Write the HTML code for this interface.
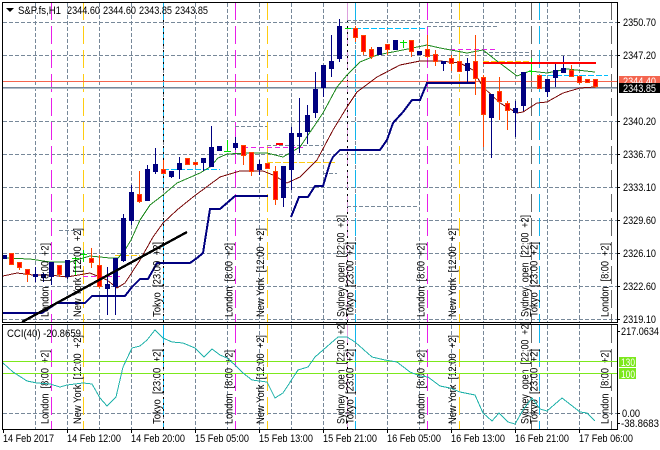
<!DOCTYPE html>
<html><head><meta charset="utf-8"><style>
html,body{margin:0;padding:0;background:#fff;width:660px;height:450px;overflow:hidden}
svg{display:block}
text{font-family:"Liberation Sans",sans-serif;font-size:11px;fill:#000;white-space:pre}
.c{shape-rendering:crispEdges}
</style></head><body>
<svg width="660" height="450" viewBox="0 0 660 450" xmlns="http://www.w3.org/2000/svg">
<rect width="660" height="450" fill="#fff"/>
<g class="c" fill="none">
<!-- grid -->
<path stroke="#778899" stroke-dasharray="4 2" d="M35.5 3V322M67.5 3V322M99.5 3V322M131.5 3V322M163.5 3V322M195.5 3V322M227.5 3V322M259.5 3V322M291.5 3V322M323.5 3V322M355.5 3V322M387.5 3V322M419.5 3V322M451.5 3V322M483.5 3V322M515.5 3V322M547.5 3V322M579.5 3V322M35.5 325V429M67.5 325V429M99.5 325V429M131.5 325V429M163.5 325V429M195.5 325V429M227.5 325V429M259.5 325V429M291.5 325V429M323.5 325V429M355.5 325V429M387.5 325V429M419.5 325V429M451.5 325V429M483.5 325V429M515.5 325V429M547.5 325V429M579.5 325V429"/>
<path stroke="#778899" stroke-dasharray="4 2" d="M3 22.5H617M3 55.5H617M3 121.5H617M3 154.5H617M3 187.5H617M3 220.5H617M3 253.5H617M3 286.5H617M3 319.5H617M3 413.5H617"/>
<!-- session lines -->
<g stroke-dasharray="18 6">
<path stroke="#e81fe8" d="M51.5 2V322M235.5 2V322M427.5 2V322M51.5 325V429M235.5 325V429M427.5 325V429"/>
<path stroke="#ffcc11" d="M83.5 2V322M267.5 2V322M459.5 2V322M83.5 325V429M267.5 325V429M459.5 325V429"/>
<path stroke="#10b4ec" d="M163.5 2V322M355.5 2V322M539.5 2V322M163.5 325V429M355.5 325V429M539.5 325V429"/>
<path stroke="#dda0dd" d="M347.5 2V322M347.5 325V429"/>
<path stroke="#666" d="M531.5 2V322M531.5 325V429M611.5 2V322M611.5 325V429"/>
</g>
<path stroke="#000" stroke-dasharray="2 4" d="M163.5 20V322M347.5 20V322M163.5 343V429M347.5 343V429"/>
<!-- objects -->
<path stroke="#778899" stroke-dasharray="4 2" d="M347 20.5H417M427 26.5H497M483 52.5H531M235 126.5H267M267 145.5H323M323 173.5H337M347 206.5H417M59 230.5H83"/>
<path stroke="#00bfff" stroke-dasharray="6 2" d="M347 28.5H425M540 75.5H608M163 169.5H220"/>
<path stroke="#e81fe8" stroke-dasharray="5 3" d="M450 49.5H496M243 147.5H303M83 276.5H120"/>
<path stroke="#ffcc11" stroke-dasharray="6 2" d="M483 61.5H530M267 162.5H335M115 255.5H140"/>
<path stroke="#f4654f" d="M3 81.5H617"/>
<path stroke="#778899" d="M3 87.5H617"/>
<path stroke="#b0bcc8" d="M3 88.5H617"/>
</g>
<!-- lines under candles -->
<path class="c" fill="none" stroke="#1f8a1f" d="M3 258L30 259L50 262L70 262L90 256L110 258L118 258L125 250L131 240L140 220L150 205L163 195L177 183L200 173L210 167L218 158L227 154L250 153L267 153L283 157L300 147L323 113L337 87L347 75L360 62L377 55L403 50L427 45L440 48L467 53L483 50L497 61L517 76L530 71L547 73L567 69L595 72"/>
<path class="c" fill="none" stroke="#7a0a0a" d="M3 276L17 273L33 275L50 275L67 277L90 273L107 280L117 288L125 283L140 260L153 237L163 223L177 210L193 197L220 177L240 171L263 171L273 175L287 183L300 177L317 160L333 130L347 107L357 92L377 77L400 65L420 61L440 61L460 63L473 70L483 87L500 103L517 113L523 112L537 103L547 102L563 93L580 88L595 87"/>
<path class="c" fill="none" stroke="#000080" stroke-width="2" d="M3 313H42L57 303H85L92 296H125L132 287L140 279H148L157 263H190L197 258L203 253L210 209H220L235 196H268M291 217L299 197H308L315 186H323L330 163L333 157L340 150H380L387 140L393 123L403 112L412 100H420L427 83H475"/>
<!-- wicks -->
<g class="c" fill="none">
<path stroke="#000080" d="M35.5 267V282M43.5 273V282M51.5 262V285M67.5 260V279M107.5 267V315M115.5 258V315M123.5 214V262M131.5 185V225M147.5 165V201M155.5 148V174M171.5 171V178M179.5 157V179M203.5 158V171M211.5 126V167M235.5 137V150M259.5 160V175M283.5 166V207M291.5 127V190M299.5 98V153M307.5 105V144M315.5 72V118M323.5 65V97M331.5 35V77M339.5 19V62M443.5 61V71M467.5 58V83M491.5 94V158M515.5 101V137M523.5 72V111M547.5 79V97M555.5 63V87M563.5 56V73"/>
<path stroke="#ff4500" d="M19.5 262V270M27.5 269V282M59.5 265V277M91.5 248V268M99.5 255V288M139.5 171V203M163.5 160V174M195.5 162V166M243.5 145V165M251.5 152V176M275.5 166V205M355.5 26V42M363.5 35V55M371.5 47V59M387.5 44V55M411.5 40V57M427.5 35V58M435.5 50V66M451.5 55V71M475.5 35V95M483.5 75V147M499.5 77V120M507.5 101V130M571.5 65V77M579.5 76V84M595.5 79V88"/>
<path stroke="#00e000" d="M75.5 257V275M72 258.5H79M83.5 250V262M80 254.5H87M227.5 140V151M224 151.5H231M345 28.5H351M403.5 40V48M400 42.5H407M531.5 58V75M528 71.5H535"/>
<!-- bodies -->
<path fill="#000080" d="M3 255h4v4h-4zM33 274h5v3h-5zM41 274h5v4h-5zM49 262h5v15h-5zM65 260h5v17h-5zM105 284h5v5h-5zM113 258h5v29h-5zM121 218h5v43h-5zM129 192h5v29h-5zM145 169h5v32h-5zM153 164h5v8h-5zM169 171h5v6h-5zM177 163h5v7h-5zM201 158h5v5h-5zM209 147h5v20h-5zM217 146h5v5h-5zM233 143h5v5h-5zM257 164h5v6h-5zM281 166h5v32h-5zM289 133h5v37h-5zM297 133h5v4h-5zM305 115h5v17h-5zM313 89h5v24h-5zM321 65h5v23h-5zM329 61h5v8h-5zM337 26h5v33h-5zM377 47h5v8h-5zM393 40h5v10h-5zM417 51h5v4h-5zM441 61h5v3h-5zM465 63h5v8h-5zM489 94h5v24h-5zM513 108h5v5h-5zM521 72h5v34h-5zM545 79h5v13h-5zM553 70h5v8h-5zM561 68h5v5h-5z"/>
<path fill="#ff0000" stroke="#ff4500" d="M9.5 253.5h4v11h-4zM17.5 262.5h4v5h-4zM25.5 269.5h4v5h-4zM57.5 265.5h4v9h-4zM89.5 258.5h4v4h-4zM97.5 265.5h4v21h-4zM137.5 194.5h4v7h-4zM161.5 169.5h4v4h-4zM185.5 158.5h4v6h-4zM193.5 162.5h4v2h-4zM241.5 145.5h4v10h-4zM249.5 152.5h4v19h-4zM265.5 163.5h4v5h-4zM273.5 171.5h4v28h-4zM353.5 28.5h4v9h-4zM361.5 35.5h4v16h-4zM369.5 49.5h4v7h-4zM385.5 44.5h4v5h-4zM409.5 40.5h4v11h-4zM425.5 49.5h4v7h-4zM433.5 54.5h4v7h-4zM449.5 58.5h4v5h-4zM457.5 61.5h4v10h-4zM473.5 61.5h4v17h-4zM481.5 77.5h4v37h-4zM497.5 91.5h4v10h-4zM505.5 103.5h4v7h-4zM537.5 75.5h4v13h-4zM569.5 70.5h4v6h-4zM577.5 76.5h4v6h-4zM585.5 79.5h4v3h-4zM593.5 79.5h4v7h-4z"/>
<path stroke="#ff0000" stroke-width="2" d="M483 63H596M276 144H283"/>
</g>
<path class="c" stroke="#000" stroke-width="2.4" d="M22 322L187 232"/>
<!-- session labels -->
<g style="font-size:11px">
<text transform="translate(48.5,317) rotate(-90)" textLength="74" lengthAdjust="spacingAndGlyphs">London  [8:00  +2]</text>
<text transform="translate(81,317) rotate(-90)" textLength="89" lengthAdjust="spacingAndGlyphs">New York  [12:00  +2]</text>
<text transform="translate(160.5,317) rotate(-90)" textLength="75" lengthAdjust="spacingAndGlyphs">Tokyo  [23:00  +2]</text>
<text transform="translate(232.5,317) rotate(-90)" textLength="74" lengthAdjust="spacingAndGlyphs">London  [8:00  +2]</text>
<text transform="translate(264,317) rotate(-90)" textLength="89" lengthAdjust="spacingAndGlyphs">New York  [12:00  +2]</text>
<text transform="translate(344.5,317) rotate(-90)" textLength="102" lengthAdjust="spacingAndGlyphs">Sydney  open  [22:00  +2]</text>
<text transform="translate(353.5,317) rotate(-90)" textLength="75" lengthAdjust="spacingAndGlyphs">Tokyo  [23:00  +2]</text>
<text transform="translate(424.5,317) rotate(-90)" textLength="74" lengthAdjust="spacingAndGlyphs">London  [8:00  +2]</text>
<text transform="translate(456,317) rotate(-90)" textLength="89" lengthAdjust="spacingAndGlyphs">New York  [12:00  +2]</text>
<text transform="translate(528.5,317) rotate(-90)" textLength="102" lengthAdjust="spacingAndGlyphs">Sydney  open  [22:00  +2]</text>
<text transform="translate(537.5,317) rotate(-90)" textLength="75" lengthAdjust="spacingAndGlyphs">Tokyo  [23:00  +2]</text>
<text transform="translate(608.5,317) rotate(-90)" textLength="74" lengthAdjust="spacingAndGlyphs">London  [8:00  +2]</text>
<text transform="translate(48.5,424) rotate(-90)" textLength="74" lengthAdjust="spacingAndGlyphs">London  [8:00  +2]</text>
<text transform="translate(81,424) rotate(-90)" textLength="89" lengthAdjust="spacingAndGlyphs">New York  [12:00  +2]</text>
<text transform="translate(160.5,424) rotate(-90)" textLength="75" lengthAdjust="spacingAndGlyphs">Tokyo  [23:00  +2]</text>
<text transform="translate(232.5,424) rotate(-90)" textLength="74" lengthAdjust="spacingAndGlyphs">London  [8:00  +2]</text>
<text transform="translate(264,424) rotate(-90)" textLength="89" lengthAdjust="spacingAndGlyphs">New York  [12:00  +2]</text>
<text transform="translate(344.5,424) rotate(-90)" textLength="102" lengthAdjust="spacingAndGlyphs">Sydney  open  [22:00  +2]</text>
<text transform="translate(353.5,424) rotate(-90)" textLength="75" lengthAdjust="spacingAndGlyphs">Tokyo  [23:00  +2]</text>
<text transform="translate(424.5,424) rotate(-90)" textLength="74" lengthAdjust="spacingAndGlyphs">London  [8:00  +2]</text>
<text transform="translate(456,424) rotate(-90)" textLength="89" lengthAdjust="spacingAndGlyphs">New York  [12:00  +2]</text>
<text transform="translate(528.5,424) rotate(-90)" textLength="102" lengthAdjust="spacingAndGlyphs">Sydney  open  [22:00  +2]</text>
<text transform="translate(537.5,424) rotate(-90)" textLength="75" lengthAdjust="spacingAndGlyphs">Tokyo  [23:00  +2]</text>
<text transform="translate(608.5,424) rotate(-90)" textLength="74" lengthAdjust="spacingAndGlyphs">London  [8:00  +2]</text>
</g>
<!-- CCI -->
<g class="c"><path stroke="#7ce81c" d="M3 361.5H617M3 373.5H617"/></g>
<path class="c" fill="none" stroke="#20b2aa" d="M3 363L13 372L27 381L37 383L50 384L60 387L67 385L83 383L92 384L100 398L107 406L116 397L123 367L132 348L140 346L147 340L155 330L163 338L172 342L183 343L195 348L204 357L212 349L220 355L227 358L235 365L243 373L252 380L267 382L275 398L283 393L298 370L308 367L315 357L323 350L338 337L347 337L355 342L372 357L385 360L397 362L410 372L420 376L428 377L440 386L450 388L460 392L475 395L483 413L492 421L499 413L508 422L515 424L523 410L532 398L540 409L547 411L562 398L580 412L587 413L595 421"/>
<text x="7" y="337" textLength="74" lengthAdjust="spacingAndGlyphs">CCI(40) -20.8659</text>
<!-- frame -->
<g class="c" fill="none" stroke="#000">
<path d="M2.5 2.5H617.5V322.5H2.5zM2.5 324.5H617.5V429.5H2.5z"/>
<path d="M617 22.5h3M617 55.5h3M617 121.5h3M617 154.5h3M617 187.5h3M617 220.5h3M617 253.5h3M617 286.5h3M617 319.5h3M617 331.5h3M617 413.5h3M617 423.5h3"/>
<path d="M3.5 430v3M67.5 430v3M131.5 430v3M195.5 430v3M259.5 430v3M323.5 430v3M387.5 430v3M451.5 430v3M515.5 430v3M579.5 430v3"/>
</g>
<!-- header -->
<path d="M6 8h8l-4 4z" fill="#000"/>
<text x="18" y="14" textLength="43" lengthAdjust="spacingAndGlyphs">S&amp;P.fs,H1</text>
<text x="67" y="14" textLength="33" lengthAdjust="spacingAndGlyphs">2344.60</text>
<text x="103" y="14" textLength="33" lengthAdjust="spacingAndGlyphs">2344.60</text>
<text x="139" y="14" textLength="33" lengthAdjust="spacingAndGlyphs">2343.85</text>
<text x="175" y="14" textLength="33" lengthAdjust="spacingAndGlyphs">2343.85</text>
<!-- price scale -->
<g>
<text x="623" y="26" textLength="33" lengthAdjust="spacingAndGlyphs">2350.70</text>
<text x="623" y="59" textLength="33" lengthAdjust="spacingAndGlyphs">2347.20</text>
<text x="623" y="125" textLength="33" lengthAdjust="spacingAndGlyphs">2340.20</text>
<text x="623" y="158" textLength="33" lengthAdjust="spacingAndGlyphs">2336.70</text>
<text x="623" y="191" textLength="33" lengthAdjust="spacingAndGlyphs">2333.10</text>
<text x="623" y="224" textLength="33" lengthAdjust="spacingAndGlyphs">2329.60</text>
<text x="623" y="257" textLength="33" lengthAdjust="spacingAndGlyphs">2326.10</text>
<text x="623" y="290" textLength="33" lengthAdjust="spacingAndGlyphs">2322.60</text>
<text x="623" y="323" textLength="33" lengthAdjust="spacingAndGlyphs">2319.10</text>
<rect class="c" x="619" y="76" width="41" height="8" fill="#f4654f"/>
<text x="623" y="85" textLength="33" lengthAdjust="spacingAndGlyphs" style="fill:#fff">2344.40</text>
<rect class="c" x="619" y="83" width="41" height="10" fill="#000"/>
<text x="623" y="92" textLength="33" lengthAdjust="spacingAndGlyphs" style="fill:#fff">2343.85</text>
<text x="621" y="335" textLength="38" lengthAdjust="spacingAndGlyphs">217.0634</text>
<rect class="c" x="619" y="357" width="17" height="10" fill="#7ce81c"/>
<text x="621" y="366" textLength="14" lengthAdjust="spacingAndGlyphs" style="fill:#fff">130</text>
<rect class="c" x="619" y="368" width="17" height="11" fill="#7ce81c"/>
<text x="621" y="378" textLength="14" lengthAdjust="spacingAndGlyphs" style="fill:#fff">100</text>
<text x="622" y="417" textLength="18" lengthAdjust="spacingAndGlyphs">0.00</text>
<text x="621" y="427" textLength="38" lengthAdjust="spacingAndGlyphs">-38.8683</text>
</g>
<!-- time axis -->
<g>
<text x="3" y="442" textLength="51" lengthAdjust="spacingAndGlyphs">14 Feb 2017</text>
<text x="67" y="442" textLength="54" lengthAdjust="spacingAndGlyphs">14 Feb 12:00</text>
<text x="131" y="442" textLength="54" lengthAdjust="spacingAndGlyphs">14 Feb 20:00</text>
<text x="195" y="442" textLength="54" lengthAdjust="spacingAndGlyphs">15 Feb 05:00</text>
<text x="259" y="442" textLength="54" lengthAdjust="spacingAndGlyphs">15 Feb 13:00</text>
<text x="323" y="442" textLength="54" lengthAdjust="spacingAndGlyphs">15 Feb 21:00</text>
<text x="387" y="442" textLength="54" lengthAdjust="spacingAndGlyphs">16 Feb 05:00</text>
<text x="451" y="442" textLength="54" lengthAdjust="spacingAndGlyphs">16 Feb 13:00</text>
<text x="515" y="442" textLength="54" lengthAdjust="spacingAndGlyphs">16 Feb 21:00</text>
<text x="579" y="442" textLength="54" lengthAdjust="spacingAndGlyphs">17 Feb 06:00</text>
</g>
</svg>
</body></html>
